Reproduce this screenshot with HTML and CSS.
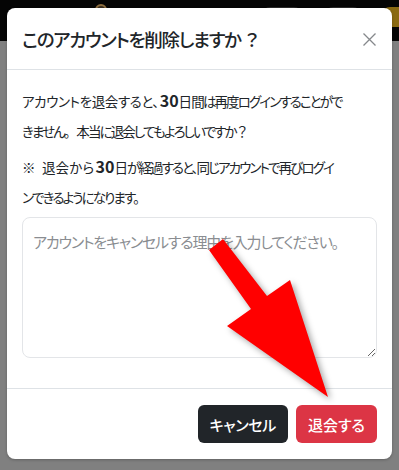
FILE: index.html
```html
<!DOCTYPE html>
<html lang="ja">
<head>
<meta charset="utf-8">
<title>アカウント削除</title>
<link rel="stylesheet" href="styles.css">
</head>
<body>
<div class="page">
  <header class="topbar">
    <span class="avatar"></span>
    <span class="pill pill-a"></span>
    <span class="pill pill-b"></span>
    <span class="pill pill-gold"></span>
  </header>
  <div class="backdrop"></div>

  <div class="modal" role="dialog" aria-modal="true">
    <div class="modal-header">
      <h5 class="modal-title">このアカウントを削除しますか<span class="q">？</span></h5>
      <button class="btn-close" aria-label="閉じる">
        <svg width="13" height="13" viewBox="0 0 13 13"><path d="M0.5 0.5L12.5 12.5M12.5 0.5L0.5 12.5" stroke="#85888b" stroke-width="1.3" fill="none"/></svg>
      </button>
    </div>
    <div class="modal-body">
      <p class="msg"><span class="lead">アカウントを退会すると、</span><b>30</b>日 間は再度ログインすることがで<br>きません<span class="q">。</span>本当に退会してもよろしいですか<span class="q">？</span></p>
      <p class="msg"><span class="lead lead-note">※ 退会から</span><b>30</b>日 が経過すると、同じアカウントで再びログイ<br>ンできるようになります。</p>
      <textarea class="reason" placeholder="アカウントをキャンセルする理由を入力してください。"></textarea>
    </div>
    <div class="modal-footer">
      <button class="btn btn-dark">キャンセル</button>
      <button class="btn btn-danger">退会する</button>
    </div>
  </div>

  <svg class="arrow" width="399" height="470" viewBox="0 0 399 470">
    <polygon points="209,250 223,239 267,296 290,280 328,397 227,326 251,309" fill="#ff0000"/>
  </svg>
</div>
</body>
</html>
```

FILE: styles.css
```css
* { box-sizing: border-box; }
html, body {
  margin: 0;
  padding: 0;
  width: 399px;
  height: 470px;
  overflow: hidden;
}
body {
  font-family: "Noto Sans CJK JP", "Noto Sans", sans-serif;
  font-feature-settings: "palt";
  color: #212529;
  background: #808080;
}
.page {
  position: relative;
  width: 399px;
  height: 470px;
  display: flex;
  flex-direction: column;
}
.topbar {
  height: 41px;
  background: #050505;
  position: relative;
  flex: none;
}
.avatar {
  position: absolute;
  left: 95px;
  top: 4px;
  width: 12px;
  height: 12px;
  border-radius: 50%;
  border: 2px solid #8c6d3f;
  background: #3a2e20;
}
.pill {
  position: absolute;
  top: 7px;
  height: 20px;
  border-radius: 8px;
  background: #2c2c2c;
}
.pill-a { left: 262px; width: 40px; }
.pill-b { left: 325px; width: 36px; }
.pill-gold { left: 382px; width: 30px; background: #8a6a12; }
.backdrop {
  flex: 1;
  background: #808080;
}
.modal {
  position: absolute;
  left: 7px;
  top: 8px;
  width: 385px;
  background: #fff;
  border-radius: 8px;
  display: flex;
  flex-direction: column;
  box-shadow: 0 1px 3px rgba(0,0,0,0.25);
}
.modal-header {
  display: flex;
  align-items: center;
  justify-content: space-between;
  padding: 16px 15px 15px;
  border-bottom: 1px solid #dee2e6;
}
.modal-title {
  margin: 0;
  font-size: 18.5px;
  font-weight: 500;
  letter-spacing: -1.3px;
  line-height: 30px;
  white-space: nowrap;
}
.q {
  font-feature-settings: normal;
  margin-left: 2px;
}
.btn-close {
  border: 0;
  background: none;
  padding: 0;
  width: 14px;
  height: 14px;
  display: flex;
  align-items: center;
  justify-content: center;
  margin-right: 1px;
}
.modal-body {
  padding: 15px 15px 30px;
  display: flex;
  flex-direction: column;
}
.msg {
  margin: 0 0 5px;
  font-size: 13.5px;
  letter-spacing: -1.9px;
  line-height: 30px;
  white-space: nowrap;
}
.msg .lead { letter-spacing: -0.4px; }
.msg .lead-note { letter-spacing: 0.2px; word-spacing: 3px; }
.msg .q { letter-spacing: -1px; margin-left: 0; }
.msg b { font-weight: 700; font-size: 16px; letter-spacing: 0; margin-left: 1px; }
.reason {
  display: block;
  width: 100%;
  height: 141px;
  border: 1px solid #e3e5e8;
  border-radius: 8px;
  padding: 12px 10px;
  font-family: inherit;
  font-feature-settings: "palt";
  font-size: 15px;
  letter-spacing: -1.2px;
  line-height: 24px;
  color: #212529;
  resize: vertical;
  outline: none;
}
.reason::placeholder { color: #8a8d91; }
.modal-footer {
  display: flex;
  justify-content: flex-end;
  gap: 8px;
  padding: 16px 15px;
  border-top: 1px solid #dee2e6;
}
.btn {
  border: 0;
  border-radius: 6px;
  height: 38px;
  padding: 0 12px;
  font-family: inherit;
  font-feature-settings: "palt";
  font-size: 15px;
  letter-spacing: -0.3px;
  font-weight: 500;
  color: #fff;
}
.btn-dark { background: #212529; }
.btn-danger { background: #dc3545; letter-spacing: 0; }
.arrow {
  position: absolute;
  left: 0;
  top: 0;
  filter: drop-shadow(3px 3px 3px rgba(0,0,0,0.35));
  pointer-events: none;
}
```
